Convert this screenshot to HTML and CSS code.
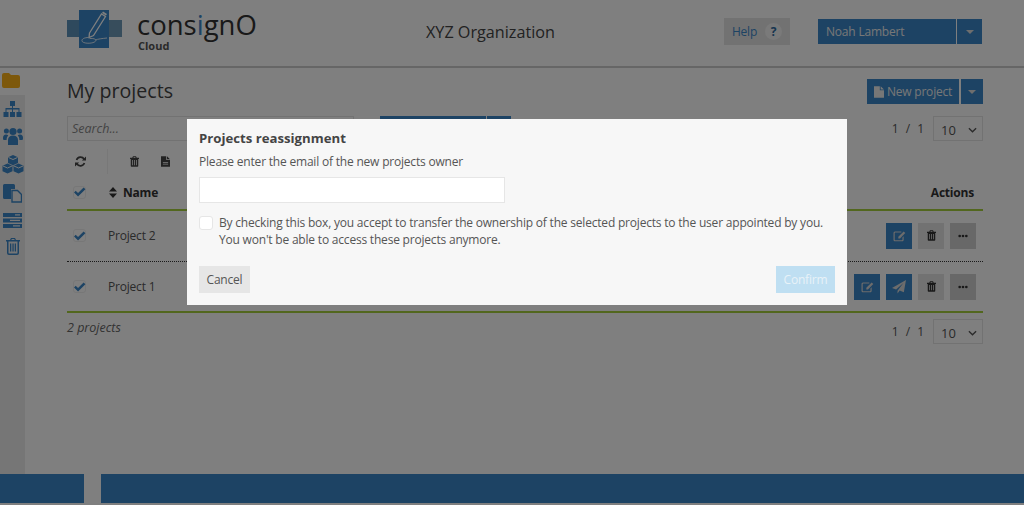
FILE: index.html

```html
<!DOCTYPE html>
<html lang="en">

<head>
    <meta charset="UTF-8">
    <meta name="viewport" content="width=device-width, initial-scale=1.0">
    <title>consignO Cloud | My projects</title>
    <link rel="stylesheet" href="styles.css">
</head>

<body>
    <svg class="defs" width="0" height="0">
        <symbol id="i-trash" viewBox="0 0 12 14">
            <path d="M4 0h4l1 2h3v1.500h-1V13a1 1 0 0 1-1 1H2a1 1 0 0 1-1-1V3.500H0V2h3zM5 1 4.600 2h2.800L7 1zM3 5v7h1V5zm2.500 0v7h1V5zM8 5v7h1V5z" />
        </symbol>
        <symbol id="i-file" viewBox="0 0 12 14">
            <path d="M0 0h7v5h5v9H0zM8 0l4 4H8zM2.500 7.500v1h7v-1zm0 2.500v1h7v-1z" />
        </symbol>
        <symbol id="i-page" viewBox="0 0 12 14">
            <path d="M0 0h7v5h5v9H0zM8 0l4 4H8z" />
        </symbol>
        <symbol id="i-check" viewBox="0 0 14 11">
            <path d="M1 6l1.800-1.800 2.600 2.500L11.500.5 13.500 2.400 5.400 10.500z" />
        </symbol>
        <symbol id="i-edit" viewBox="0 0 14 13">
            <path d="M2 1.500h7v1.300H2.300a.5.500 0 0 0-.5.500v7.200c0 .3.200.5.500.5h7.400c.3 0 .5-.2.500-.5V8l1.300-1.300v3.800c0 1-.8 1.800-1.800 1.800H2.300c-1 0-1.800-.8-1.800-1.800V3.300c0-1 .7-1.800 1.500-1.800z" />
            <path d="M11.500 1.500l1.800 1.800-5.800 5.800H5.700V7.300z" />
        </symbol>
        <symbol id="i-plane" viewBox="0 0 16 16">
            <path d="M16 0 13.500 14 8.800 12 6.300 15.500V12.200L13 3.500 4.700 10.800 0 9z" />
        </symbol>
        <symbol id="i-dots" viewBox="0 0 12 4">
            <circle cx="2" cy="2" r="1.600" />
            <circle cx="6" cy="2" r="1.600" />
            <circle cx="10" cy="2" r="1.600" />
        </symbol>
        <symbol id="i-chevron" viewBox="0 0 10 6">
            <path d="M1 1l4 4 4-4" fill="none" stroke="currentColor" stroke-width="1.500" />
        </symbol>
    </svg>

    <header class="topbar">
        <div class="logo">
            <svg class="logo-mark" width="55" height="38" viewBox="0 0 55 38">
                <rect y="10" width="12" height="17" fill="#5d93bb" />
                <rect x="42" y="10" width="13" height="17" fill="#6f9ab8" />
                <rect x="12" width="30" height="38" fill="#3a86c8" />
                <path d="M22.500 23 34.500 4 38.500 6.500 26.500 25.500 22 27.500z" fill="none" stroke="#fff" stroke-width="1.300" />
                <path d="M35 3 36 1.500 40 4 39 5.500z" fill="#fff" />
                <path d="M21.500 27.500c-4 0-7 1.500-6.500 3.500.5 2.500 9 3 12.500 1 3-1.700 1-4-5-3.500m6 1.500c2-1 7-1.500 11.500-2" fill="none" stroke="#fff" stroke-width=".8" />
            </svg>
            <div class="logo-text">
                <div class="logo-name">cons<span class="logo-i">i</span>gnO</div>
                <div class="logo-sub">Cloud</div>
            </div>
        </div>
        <div class="org">XYZ Organization</div>
        <a class="help">Help <span class="help-q">?</span></a>
        <div class="split user-split">
            <a class="btn btn-user">Noah Lambert</a>
            <a class="btn btn-caret"><span class="caret"></span></a>
        </div>
    </header>

    <div class="middle">
        <nav class="sidebar">
            <div class="side-top">
                <svg width="18" height="15" viewBox="0 0 18 15">
                    <path d="M2 0h5l2 2h7a2 2 0 0 1 2 2v9a2 2 0 0 1-2 2H2a2 2 0 0 1-2-2V2a2 2 0 0 1 2-2z" fill="#fbb117" />
                </svg>
            </div>
            <div class="side-rest">
                <svg width="19" height="16" viewBox="0 0 19 16">
                    <path d="M7 0h5v5h-2v2h6.500v4H18.500v5h-5v-5h2V8.500H10V11h2v5H7v-5h2V8.500H3.500V11h2v5h-5v-5h2V7H9V5H7z" />
                </svg>
                <svg width="20" height="18" viewBox="0 0 20 18">
                    <circle cx="10" cy="4.500" r="3.600" />
                    <circle cx="3.400" cy="4" r="2.500" />
                    <circle cx="16.600" cy="4" r="2.500" />
                    <path d="M5 18v-5c0-3 2-4.500 5-4.500s5 1.500 5 4.500v5zM0 11c0-2 1-3.500 3-3.500 1 0 1.700.3 2.300.9C4 9.500 3.600 11 3.600 13H1c-.6 0-1-.5-1-2zM20 11c0-2-1-3.500-3-3.500-1 0-1.700.3-2.300.9 1.300 1.100 1.700 2.600 1.700 4.600H19c.6 0 1-.5 1-2z" />
                </svg>
                <svg width="22" height="19" viewBox="0 0 22 19">
                    <path d="M11 0l5 2.200V8l-5 2.200L6 8V2.200zM5.500 8.500l5 2.200v5.600l-5 2.200-5-2.200v-5.600zM16.500 8.500l5 2.200v5.600l-5 2.200-5-2.200v-5.600z" />
                    <path d="M6.500 2.500 11 4.500l4.500-2M1 11l4.500 2 4.500-2M12 11l4.500 2 4.500-2" fill="none" stroke="#f0f0f0" stroke-width="1" />
                </svg>
                <svg width="19" height="19" viewBox="0 0 19 19">
                    <path d="M0 1.500A1.500 1.500 0 0 1 1.500 0h9A1.500 1.500 0 0 1 12 1.500V5H8v10H1.500A1.500 1.500 0 0 1 0 13.500z" />
                    <path d="M9 6.500h5.500L18.500 10.500V18H9z" fill="#f0f0f0" stroke="#3a86c8" stroke-width="1.400" />
                </svg>
                <svg width="19" height="15" viewBox="0 0 19 15">
                    <rect width="19" height="4" />
                    <rect y="5.500" width="19" height="4" />
                    <rect y="11" width="19" height="4" />
                    <rect x="7" y="6.800" width="10" height="1.200" fill="#f0f0f0" />
                    <rect x="12" y="1.300" width="5" height="1.200" fill="#f0f0f0" />
                    <rect x="10" y="12.300" width="7" height="1.200" fill="#f0f0f0" />
                </svg>
                <svg width="14" height="17" viewBox="0 0 14 17">
                    <path d="M5 0h4l1 2h4v1.500h-1V15a2 2 0 0 1-2 2H3a2 2 0 0 1-2-2V3.500H0V2h4zM5.800 1 5.300 2h3.400l-.5-1zM2.500 3.500V15c0 .3.200.5.500.5h8c.3 0 .5-.2.500-.5V3.500zM4 5.500h1.300v8H4zm2.400 0h1.300v8H6.400zm2.300 0H10v8H8.700z" />
                </svg>
            </div>
        </nav>

        <main class="content">
            <div class="title-row">
                <h1>My projects</h1>
                <div class="split new-split">
                    <a class="btn btn-new"><svg class="icon-page" width="10" height="12"><use href="#i-page" /></svg>New project</a>
                    <a class="btn btn-caret"><span class="caret"></span></a>
                </div>
            </div>

            <div class="filter-row">
                <div class="search">Search...</div>
                <div class="split filter-split">
                    <a class="btn btn-filter"></a>
                    <a class="btn btn-filter-caret"></a>
                </div>
                <div class="pager">
                    <span>1</span><span>/</span><span>1</span>
                    <div class="page-size">10<svg width="9" height="6"><use href="#i-chevron" /></svg></div>
                </div>
            </div>

            <div class="toolbar">
                <div class="tool-refresh">
                    <svg width="11" height="11" viewBox="0 0 12 12">
                        <path d="M10 3.500A4.600 4.600 0 0 0 1.700 4.300M2 8.500a4.600 4.600 0 0 0 8.300-.8" fill="none" stroke="currentColor" stroke-width="1.800" />
                        <path d="M12 .5V5H7.500zM0 11.500V7h4.500z" />
                    </svg>
                </div>
                <div class="tool-group">
                    <svg width="9" height="11"><use href="#i-trash" /></svg>
                    <svg width="9" height="11"><use href="#i-file" /></svg>
                </div>
            </div>

            <div class="row row-head">
                <span class="check"><svg width="13" height="10"><use href="#i-check" /></svg></span>
                <svg class="sort" width="8" height="11" viewBox="0 0 8 11"><path d="M4 0l4 4.500H0zM4 11 0 6.500h8z" /></svg>
                <span class="name">Name</span>
                <span class="actions-title">Actions</span>
            </div>

            <div class="row row-first">
                <span class="check"><svg width="13" height="10"><use href="#i-check" /></svg></span>
                <span class="project">Project 2</span>
                <div class="actions">
                    <a class="act act-blue"><svg width="13" height="12"><use href="#i-edit" /></svg></a>
                    <a class="act act-grey"><svg width="9" height="11"><use href="#i-trash" /></svg></a>
                    <a class="act act-dark"><svg width="10" height="4"><use href="#i-dots" /></svg></a>
                </div>
            </div>

            <div class="row row-last">
                <span class="check"><svg width="13" height="10"><use href="#i-check" /></svg></span>
                <span class="project">Project 1</span>
                <div class="actions">
                    <a class="act act-blue"><svg width="13" height="12"><use href="#i-edit" /></svg></a>
                    <a class="act act-blue"><svg width="14" height="14"><use href="#i-plane" /></svg></a>
                    <a class="act act-grey"><svg width="9" height="11"><use href="#i-trash" /></svg></a>
                    <a class="act act-dark"><svg width="10" height="4"><use href="#i-dots" /></svg></a>
                </div>
            </div>

            <div class="table-foot">
                <em>2 projects</em>
                <div class="pager">
                    <span>1</span><span>/</span><span>1</span>
                    <div class="page-size">10<svg width="9" height="6"><use href="#i-chevron" /></svg></div>
                </div>
            </div>
        </main>
    </div>

    <footer class="bottom">
        <div class="bottom-left"></div>
        <div class="bottom-right"></div>
    </footer>

    <div class="overlay">
        <div class="modal">
            <h2>Projects reassignment</h2>
            <p class="modal-text">Please enter the email of the new projects owner</p>
            <input class="modal-input" type="text">
            <label class="modal-check">
                <span class="box"></span>
                <span>By checking this box, you accept to transfer the ownership of the selected projects to the user appointed by you.<br>You won't be able to access these projects anymore.</span>
            </label>
            <div class="modal-buttons">
                <a class="btn-cancel">Cancel</a>
                <a class="btn-confirm">Confirm</a>
            </div>
        </div>
    </div>
</body>

</html>
```

FILE: styles.css

```css
* {
    box-sizing: border-box;
}

html,
body {
    height: 100%;
}

body {
    font-family: 'Open Sans', 'Liberation Sans', sans-serif;
    font-size: 12px;
    letter-spacing: -0.2px;
    background-color: #fff;
    color: #444;
    margin: 0;
    display: flex;
    flex-direction: column;
    overflow: hidden;
}

svg {
    fill: currentColor;
    display: block;
}

.defs {
    position: absolute;
}

/* top bar */
.topbar {
    height: 68px;
    flex: none;
    display: flex;
    align-items: center;
    padding: 0 42px 3px 67px;
    border-bottom: 2px solid #ccc;
    background-color: #fff;
}

.logo {
    display: flex;
    width: 300px;
    gap: 15px;
    align-items: flex-start;
    align-self: flex-start;
    margin-top: 10px;
}

.logo-name {
    font-size: 27.5px;
    line-height: 30px;
    letter-spacing: 0;
    color: #333;
}

.logo-i {
    color: #3a86c8;
}

.logo-sub {
    font-size: 11px;
    font-weight: 700;
    line-height: 12px;
    letter-spacing: 0;
    color: #555;
    margin: 0 0 0 1px;
}

.org {
    width: 357px;
    text-align: center;
    font-size: 16.2px;
    letter-spacing: 0;
    color: #444;
    padding-right: 110px;
}

.help {
    width: 66px;
    height: 27px;
    display: flex;
    align-items: center;
    justify-content: center;
    gap: 8px;
    background-color: #e5e5e5;
    color: #3a86c8;
}

.help-q {
    width: 17px;
    height: 17px;
    border-radius: 50%;
    background-color: #f4f4f4;
    text-align: center;
    line-height: 17px;
    font-weight: 700;
    font-size: 12px;
    color: #2d6a9f;
}

.split {
    display: flex;
}

.user-split {
    margin-left: 28px;
    width: 164px;
    height: 25px;
    gap: 1px;
}

.btn {
    display: flex;
    align-items: center;
    background-color: #3a86c8;
    color: #eee;
}

.btn-user {
    flex: 1;
    padding-left: 8px;
}

.btn-caret {
    width: 25px;
    justify-content: center;
}

.caret {
    border-left: 4px solid transparent;
    border-right: 4px solid transparent;
    border-top: 4px solid #ddd;
}

/* sidebar */
.middle {
    flex: 1;
    display: flex;
    min-height: 0;
}

.sidebar {
    width: 25px;
    flex: none;
    display: flex;
    flex-direction: column;
}

.side-top {
    height: 27px;
    padding: 5px 0 0 2px;
}

.side-rest {
    flex: 1;
    background-color: #ededed;
    color: #3a86c8;
    display: flex;
    flex-direction: column;
    align-items: center;
    gap: 10px;
    padding-top: 6px;
}

.content {
    flex: 1;
    padding: 11px 41px 0 42px;
    min-width: 0;
}

.title-row {
    display: flex;
    justify-content: space-between;
    height: 25px;
}

h1 {
    font-size: 19.6px;
    font-weight: 400;
    line-height: 23px;
    letter-spacing: 0;
    margin: 0;
    color: #444;
}

.new-split {
    gap: 2px;
}

.new-split .btn-caret {
    width: 22px;
}

.btn-new {
    width: 92px;
    justify-content: center;
    gap: 3px;
}

/* filter row */
.filter-row {
    display: flex;
    margin-top: 12px;
    height: 25px;
}

.search {
    width: 287px;
    height: 25px;
    border: 1px solid #e4e4e4;
    font-style: italic;
    font-size: 12.5px;
    line-height: 24px;
    letter-spacing: 0;
    padding-left: 4px;
    color: #888;
}

.filter-split {
    margin-left: 26px;
    gap: 1px;
    height: 25px;
}

.btn-filter {
    width: 106px;
}

.btn-filter-caret {
    width: 24px;
}

.pager {
    margin-left: auto;
    display: flex;
    align-items: center;
    color: #555;
    gap: 7px;
    letter-spacing: 0;
}

.page-size {
    width: 50px;
    height: 25px;
    border: 1px solid #e4e4e4;
    display: flex;
    align-items: center;
    justify-content: space-between;
    padding: 2px 5px 0 7px;
    margin-left: 2px;
    font-size: 13px;
}

/* table */
.toolbar {
    display: flex;
    height: 25px;
    margin-top: 8px;
    align-items: center;
    color: #444;
}

.tool-refresh {
    width: 41px;
    padding-left: 8px;
    height: 25px;
    display: flex;
    align-items: center;
    border-right: 1px solid #f0f0f0;
}

.tool-group {
    display: flex;
    gap: 22px;
    padding-left: 22px;
}

.row {
    display: flex;
    align-items: center;
    padding-left: 6px;
}

.row-head {
    height: 37px;
    padding-top: 1px;
    border-bottom: 2px solid #a4cf3c;
}

.row-first {
    height: 51px;
    border-bottom: 1px dotted #333;
    padding-bottom: 1px;
}

.row-last {
    height: 51px;
    border-bottom: 2px solid #a4cf3c;
}

.check {
    width: 13px;
    height: 13px;
    flex: none;
    display: flex;
    align-items: center;
    border: 1px solid #eee;
    border-radius: 3px;
    color: #3a86c8;
}

.check svg {
    flex: none;
    margin-left: -1px;
}

.sort {
    color: #333;
    margin-left: 23px;
}

.name {
    font-weight: 700;
    color: #333;
    margin-left: 6px;
}

.actions-title {
    margin-left: auto;
    margin-right: 9px;
    font-weight: 700;
    color: #333;
}

.project {
    margin-left: 22px;
    color: #555;
}

.actions {
    margin-left: auto;
    margin-right: 7px;
    display: flex;
    gap: 6px;
}

.act {
    width: 26px;
    height: 26px;
    display: flex;
    align-items: center;
    justify-content: center;
}

.act-blue {
    background-color: #3a86c8;
    color: #d8d8d8;
}

.act-grey {
    background-color: #e5e5e5;
    color: #333;
}

.act-dark {
    background-color: #d0d0d0;
    color: #333;
}

.table-foot {
    display: flex;
    align-items: center;
    margin-top: 6px;
    height: 25px;
}

.table-foot em {
    color: #666;
    font-size: 12.5px;
    letter-spacing: 0;
    margin-top: -9px;
}

/* bottom bar */
.bottom {
    flex: none;
    height: 29px;
    margin-bottom: 2px;
    display: flex;
    gap: 17px;
}

.bottom-left {
    width: 84px;
    background-color: #3a86c8;
}

.bottom-right {
    flex: 1;
    background-color: #3a86c8;
}

/* dialog */
.overlay {
    position: fixed;
    inset: 0;
    background-color: rgba(0, 0, 0, 0.5);
    padding: 119px 0 0 187px;
}

.modal {
    width: 660px;
    height: 186px;
    background-color: #f7f7f7;
    padding: 12px 12px 0;
    color: #555;
}

.modal h2 {
    font-size: 13.2px;
    line-height: 15px;
    font-weight: 700;
    letter-spacing: 0;
    margin: 0;
    color: #444;
}

.modal-text {
    margin: 7px 0 0;
    line-height: 17px;
}

.modal-input {
    display: block;
    width: 306px;
    height: 26px;
    margin-top: 7px;
    border: 1px solid #e6e6e6;
    background-color: #fff;
    border-radius: 0;
    outline: none;
}

.modal-check {
    display: flex;
    gap: 6px;
    margin-top: 11px;
    line-height: 17px;
}

.box {
    width: 14px;
    height: 14px;
    border-radius: 3px;
    background-color: #fff;
    border: 1px solid #e6e6e6;
    margin-top: 2px;
    flex: none;
}

.modal-buttons {
    display: flex;
    justify-content: space-between;
    margin-top: 18px;
}

.btn-cancel {
    width: 51px;
    height: 27px;
    background-color: #e6e6e6;
    color: #555;
    text-align: center;
    line-height: 27px;
}

.btn-confirm {
    width: 59px;
    height: 27px;
    background-color: #bfdff2;
    color: #e8f2f8;
    text-align: center;
    line-height: 27px;
}
```
